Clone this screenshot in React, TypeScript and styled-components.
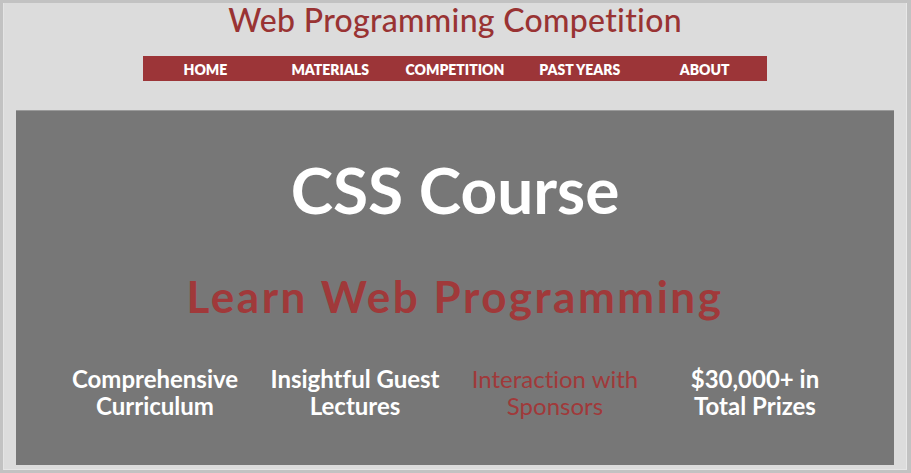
import React from "react";
import styled, { createGlobalStyle } from "styled-components";

const Global = createGlobalStyle`
  html, body { margin: 0; padding: 0; }
  body {
    width: 911px;
    height: 473px;
    overflow: hidden;
    background: #c2c2c2;
    font-family: Lato, "Open Sans", sans-serif;
    font-variant-ligatures: none;
  }
`;

const Frame = styled.div`
  box-sizing: border-box;
  margin: 3px 4px 0 3px;
  width: 904px;
  height: 467px;
  background: #dcdcdc;
  border-left: 1px solid #e4e4e4;
  border-right: 1px solid #e8e8e8;
  border-bottom: 1px solid #e6e6e6;
  display: flex;
  flex-direction: column;
  align-items: center;
  padding: 0 12px 4px 12px;
`;

const Title = styled.h1`
  margin: 0;
  height: 53px;
  color: #993333;
  font-size: 32px;
  font-weight: 500;
  letter-spacing: 0.3px;
  line-height: 34px;
  text-align: center;
`;

const Nav = styled.nav`
  width: 624px;
  height: 25px;
  background: #9c3538;
  display: grid;
  grid-template-columns: repeat(5, 1fr);
  align-items: center;
`;

const NavItem = styled.a`
  padding-top: 3px;
  color: #ffffff;
  font-weight: 800;
  font-size: 14px;
  line-height: 22px;
  text-align: center;
  text-decoration: none;
  text-transform: uppercase;
`;

const Hero = styled.section`
  box-sizing: border-box;
  margin-top: 29px;
  align-self: stretch;
  flex: 1;
  background: #777777;
  border-top: 1px solid #9a9a9a;
  display: flex;
  flex-direction: column;
  align-items: center;
`;

const HeroTitle = styled.h2`
  margin: 43px 0 0;
  color: #ffffff;
  font-size: 64px;
  font-weight: 700;
  line-height: 72px;
`;

const Tagline = styled.h3`
  margin: 45px 0 0;
  color: #a0393a;
  font-size: 44px;
  font-weight: 700;
  letter-spacing: 2.5px;
  line-height: 50px;
`;

const Features = styled.div`
  margin-top: 44px;
  width: 800px;
  display: grid;
  grid-template-columns: repeat(4, 1fr);
`;

const Feature = styled.p<{ $accent?: boolean }>`
  margin: 0;
  color: ${(p) => (p.$accent ? "#a0393a" : "#ffffff")};
  font-size: 24px;
  font-weight: ${(p) => (p.$accent ? 400 : 700)};
  line-height: 27px;
  text-align: center;
`;

const navItems = ["Home", "Materials", "Competition", "Past Years", "About"];

export default function App() {
  return (
    <>
      <Global />
      <Frame>
        <Title>Web Programming Competition</Title>
        <Nav>
          {navItems.map((n) => (
            <NavItem key={n} href="#">
              {n}
            </NavItem>
          ))}
        </Nav>
        <Hero>
          <HeroTitle>CSS Course</HeroTitle>
          <Tagline>Learn Web Programming</Tagline>
          <Features>
            <Feature>
              Comprehensive
              <br />
              Curriculum
            </Feature>
            <Feature>
              Insightful Guest
              <br />
              Lectures
            </Feature>
            <Feature $accent>
              Interaction with
              <br />
              Sponsors
            </Feature>
            <Feature>
              $30,000+ in
              <br />
              Total Prizes
            </Feature>
          </Features>
        </Hero>
      </Frame>
    </>
  );
}
